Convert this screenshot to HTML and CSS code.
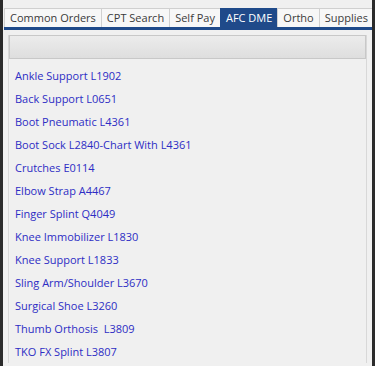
FILE: index.html
```html
<!DOCTYPE html>
<html lang="en">
<head>
    <meta charset="UTF-8">
    <meta name="viewport" content="width=device-width, initial-scale=1.0">
    <title>AFC DME</title>
    <link rel="stylesheet" href="styles.css">
</head>
<body>
    <div class="frame">
        <ul class="tabs">
            <li class="tab">Common Orders</li>
            <li class="tab">CPT Search</li>
            <li class="tab">Self Pay</li>
            <li class="tab active">AFC DME</li>
            <li class="tab">Ortho</li>
            <li class="tab">Supplies</li>
        </ul>
        <div class="panel">
            <div class="panel-header"></div>
            <ul class="items">
                <li><a href="#">Ankle Support L1902</a></li>
                <li><a href="#">Back Support L0651</a></li>
                <li><a href="#">Boot Pneumatic L4361</a></li>
                <li><a href="#">Boot Sock L2840-Chart With L4361</a></li>
                <li><a href="#">Crutches E0114</a></li>
                <li><a href="#">Elbow Strap A4467</a></li>
                <li><a href="#">Finger Splint Q4049</a></li>
                <li><a href="#">Knee Immobilizer L1830</a></li>
                <li><a href="#">Knee Support L1833</a></li>
                <li><a href="#">Sling Arm/Shoulder L3670</a></li>
                <li><a href="#">Surgical Shoe L3260</a></li>
                <li><a href="#">Thumb Orthosis&nbsp; L3809</a></li>
                <li><a href="#">TKO FX Splint L3807</a></li>
            </ul>
        </div>
    </div>
</body>
</html>
```

FILE: styles.css
```css
body {
    margin: 0;
    background: #2b2b2b;
    font-family: "Open Sans", Arial, sans-serif;
}

.frame {
    margin: 0 3px;
    height: 366px;
    overflow: hidden;
    background: #f0f0f0;
}

.tabs {
    display: flex;
    margin: 0 0 0 1px;
    padding: 8px 0 0 0;
    list-style: none;
    border-bottom: 3px solid #1f4a8a;
}

.tab {
    padding: 1px 5px 1px 5px;
    font-size: 11px;
    line-height: 16px;
    white-space: nowrap;
    color: #3a3a3a;
    background: #f7f7f7;
    border: 1px solid #d0d0d0;
    border-bottom: none;
    margin-right: -1px;
}

.tab.active {
    background: #1f4a8a;
    border-color: #1f4a8a;
    color: white;
}

.panel {
    margin: 5px 5px 0 5px;
    border-left: 1px solid #d8d8d8;
    border-right: 1px solid #d8d8d8;
}

.panel-header {
    height: 22px;
    border: 1px solid #c8c8c8;
    background: linear-gradient(#ececec, #dedede);
}

.items {
    list-style: none;
    margin: 0;
    padding: 5px 0 0 6px;
}

.items li {
    height: 23px;
    line-height: 23px;
    font-size: 11px;
}

.items a {
    color: #2d2dc4;
    text-decoration: none;
}
```
